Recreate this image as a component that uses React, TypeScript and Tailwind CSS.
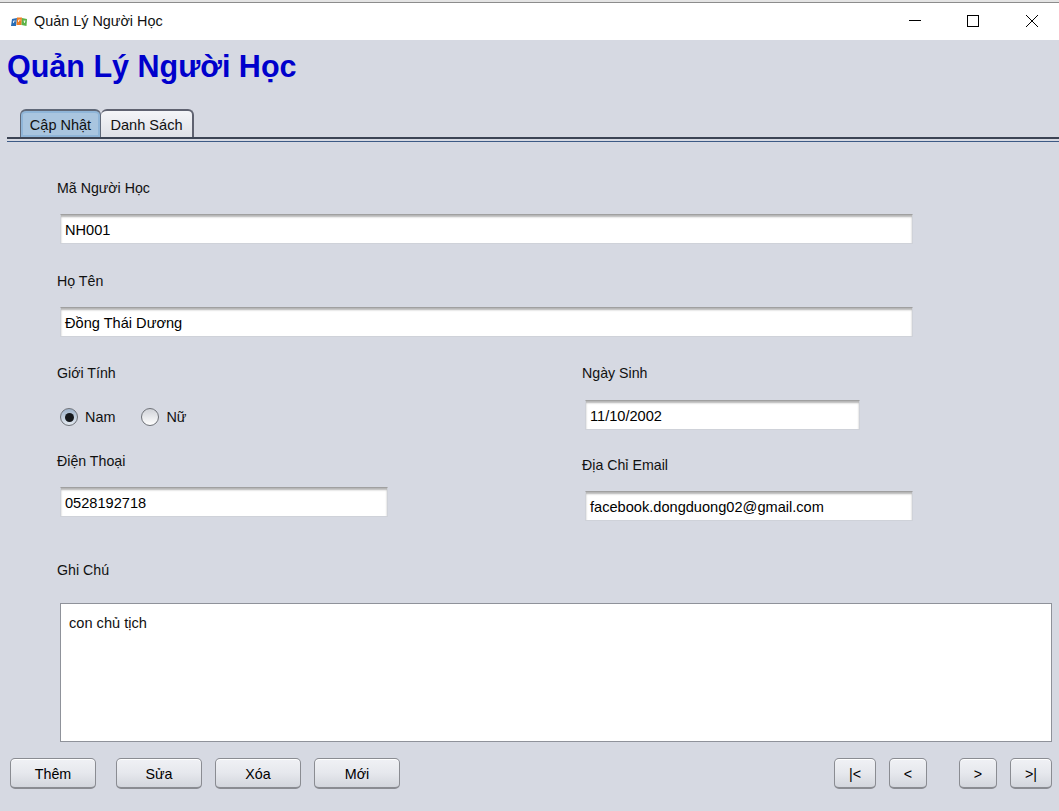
import React from 'react';

const Field = ({ value, className = '' }: { value: string; className?: string }) => (
  <div className={`flex items-center pl-[4px] bg-white border border-[#cfd2d9] border-t-[#a0a0a0] shadow-[inset_0_2px_2px_#b4b4b4] text-[14.6px] text-black ${className}`}>
    {value}
  </div>
);

const Label = ({ children, className = '' }: { children: React.ReactNode; className?: string }) => (
  <div className={`h-[18px] leading-[18px] text-[14.2px] text-[#111] ${className}`}>{children}</div>
);

const Btn = ({ children, className = '' }: { children: React.ReactNode; className?: string }) => (
  <button className={`h-[31px] pt-[3px] flex items-center justify-center rounded-[5px] border border-[#8a8c92] border-b-2 bg-gradient-to-b from-[#f0f1f5] via-[#e6e8ed] to-[#d3d6dd] text-[14.3px] text-black shadow-[inset_0_1px_0_#fff] ${className}`}>
    {children}
  </button>
);

const Radio = ({ checked }: { checked?: boolean }) => (
  <span className={`w-[18px] h-[18px] rounded-full border border-[#6f7278] flex items-center justify-center ${checked ? 'bg-gradient-to-b from-[#9fb3ca] to-[#e3e9f0]' : 'bg-gradient-to-b from-[#d0d2d8] to-[#ffffff]'}`}>
    {checked && <span className="w-[9px] h-[9px] rounded-full bg-[#15181c]" />}
  </span>
);

const FptLogo = () => (
  <svg width="16" height="10" viewBox="0 0 16 10">
    <polygon points="1,2 6,1 5,9 0,9" fill="#2a6db5" />
    <polygon points="6,0.5 11,0.5 10.5,8 5.5,8" fill="#ef7d22" />
    <polygon points="11,1 16,2 15.5,9 10.5,8" fill="#5cb247" />
    <path d="M2.5 4h2M2.5 4v2M7.5 3h2M7.5 3v2M12.5 4h2M13.5 4v2" stroke="#fff" strokeWidth="0.8" fill="none" />
  </svg>
);

export default function App() {
  return (
    <div className="w-[1059px] h-[811px] overflow-hidden flex flex-col bg-[#d6d9e2] font-['Liberation_Sans',Arial,sans-serif]">
      <div className="h-[3px] shrink-0 bg-[#e4e4e4] border-b border-[#8c8c8c]" />

      {/* window title bar */}
      <div className="h-[37px] shrink-0 bg-white flex items-center pl-[11px]">
        <FptLogo />
        <span className="ml-[7px] pt-[1px] text-[14.4px] text-[#111]">Quản Lý Người Học</span>
        <div className="ml-auto flex items-center pb-[1px] text-black">
          <svg width="12" height="12" viewBox="0 0 12 12" className="mr-[46px]"><path d="M0 5.5h12" stroke="#000" /></svg>
          <svg width="12" height="12" viewBox="0 0 12 12" className="mr-[47px]"><rect x="0.5" y="0.5" width="11" height="11" fill="none" stroke="#000" /></svg>
          <svg width="12" height="12" viewBox="0 0 12 12" className="mr-[21px]"><path d="M0 0l12 12M12 0l-12 12" stroke="#000" /></svg>
        </div>
      </div>

      <div className="h-[69px] shrink-0 pl-[7px] pt-[8px]">
        <h1 className="text-[30.5px] leading-[36px] font-bold text-[#0000cc]">Quản Lý Người Học</h1>
      </div>

      {/* tabs */}
      <div className="shrink-0 ml-[7px]">
        <div className="flex pl-[13px] h-[28px]">
          <div className="w-[81px] pt-[3px] flex items-center justify-center rounded-t-[6px] border border-b-0 border-[#5f6878] border-t-2 bg-[#a9c5df] shadow-[inset_0_0_0_2px_#8fb5d8] text-[14.5px] text-[#111]">Cập Nhật</div>
          <div className="w-[93px] pt-[3px] flex items-center justify-center rounded-t-[6px] border-2 border-b-0 border-l-0 border-[#5f6270] bg-gradient-to-b from-[#f4f5f8] to-[#dfe1e7] text-[14.6px] text-[#111]">Danh Sách</div>
        </div>
        <div className="h-[5px] border-t-2 border-[#3c4454] border-b border-b-[#3d5a85]" />
      </div>

      {/* form */}
      <div className="flex-1 pl-[57px] pt-[37px]">
        <Label>Mã Người Học</Label>
        <Field value="NH001" className="ml-[3px] mt-[17px] w-[853px] h-[30px] pt-[4px]" />
        <Label className="mt-[28px]">Họ Tên</Label>
        <Field value="Đồng Thái Dương" className="ml-[3px] mt-[17px] w-[853px] h-[30px] pt-[3px]" />

        <div className="mt-[27px] flex">
          <div className="w-[525px]">
            <Label>Giới Tính</Label>
            <div className="mt-[26px] h-[18px] ml-[3px] flex items-center text-[14.4px] text-[#111]">
              <Radio checked />
              <span className="ml-[7px] pt-[1px]">Nam</span>
              <span className="ml-[26px]"><Radio /></span>
              <span className="ml-[7px] pt-[1px]">Nữ</span>
            </div>
            <Label className="mt-[26px]">Điện Thoại</Label>
            <Field value="0528192718" className="ml-[3px] mt-[17px] w-[328px] h-[30px] pt-[3px]" />
          </div>
          <div>
            <Label>Ngày Sinh</Label>
            <Field value="11/10/2002" className="ml-[3px] mt-[18px] w-[275px] h-[30px] pt-[3px]" />
            <Label className="mt-[26px]">Địa Chỉ Email</Label>
            <Field value="facebook.dongduong02@gmail.com" className="ml-[3px] mt-[17px] w-[328px] h-[30px] pt-[3px]" />
          </div>
        </div>

        <Label className="mt-[40px]">Ghi Chú</Label>
        <div className="ml-[3px] mt-[24px] w-[992px] h-[139px] bg-white border border-[#8f929a] pl-[8px] pt-[10px] text-[14.6px] leading-[18px] text-[#111]">con chủ tịch</div>
      </div>

      {/* action buttons */}
      <div className="h-[69px] shrink-0 pt-[16px] pl-[10px] pr-[7px] flex">
        <Btn className="w-[86px]">Thêm</Btn>
        <Btn className="w-[86px] ml-[20px]">Sửa</Btn>
        <Btn className="w-[86px] ml-[13px]">Xóa</Btn>
        <Btn className="w-[86px] ml-[13px]">Mới</Btn>
        <Btn className="w-[42px] ml-auto">|&lt;</Btn>
        <Btn className="w-[38px] ml-[13px]">&lt;</Btn>
        <Btn className="w-[38px] ml-[32px]">&gt;</Btn>
        <Btn className="w-[42px] ml-[13px]">&gt;|</Btn>
      </div>
    </div>
  );
}
